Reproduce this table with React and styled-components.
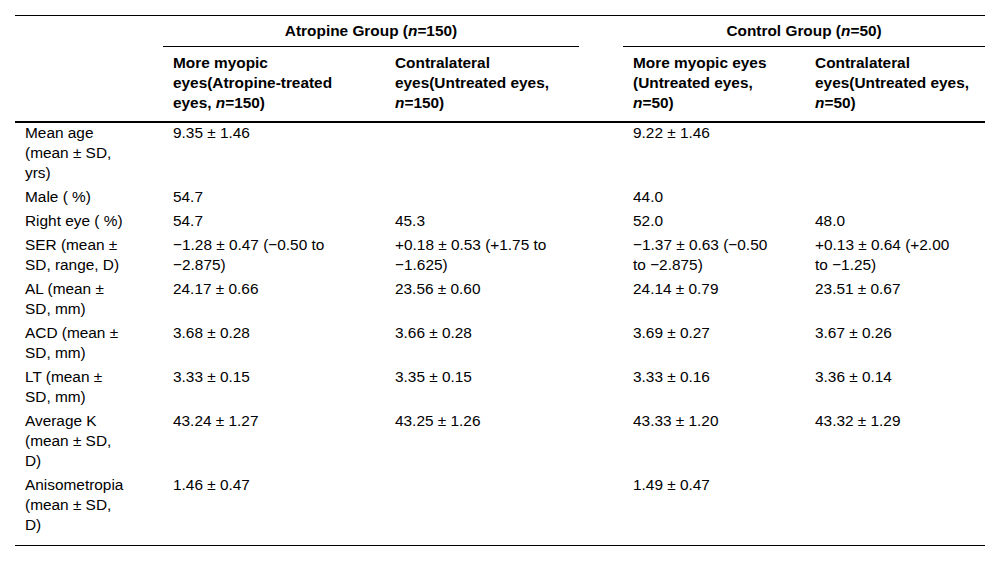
import React from "react";
import styled, { createGlobalStyle } from "styled-components";

const Global = createGlobalStyle`
  html, body { margin: 0; padding: 0; background: #ffffff; }
  body {
    font-family: "Liberation Sans", Arial, Helvetica, sans-serif;
    color: #000000;
    font-size: 15.4px;
  }
`;

const Page = styled.div`
  padding: 15px 15px 0 15px;
`;

const Table = styled.table`
  width: 970px;
  border-collapse: collapse;
  table-layout: fixed;
  border-top: 1px solid #000;
  border-bottom: 1px solid #000;
`;

const Col = styled.col`
  width: ${(p) => p.$w}px;
`;

const GroupHead = styled.th`
  font-weight: bold;
  text-align: center;
  line-height: 20px;
  padding: 5px 0 5px 0;
  white-space: nowrap;
  border-bottom: ${(p) => (p.$line ? "1px solid #000" : "none")};
`;

const SubRow = styled.tr`
  border-bottom: 2px solid #000;
`;

const SubHead = styled.th`
  font-weight: bold;
  text-align: left;
  vertical-align: top;
  line-height: 20px;
  padding: 6px 10px 8px 10px;
  white-space: nowrap;
`;

const Cell = styled.td`
  text-align: left;
  vertical-align: top;
  line-height: 20px;
  padding: 0 10px ${(p) => (p.$last ? 10 : 4)}px 10px;
  white-space: nowrap;
`;

const Line = styled.span`
  display: block;
`;

const Lines = ({ lines }) => (
  <>
    {lines.map((l, i) => (
      <Line key={i}>{l}</Line>
    ))}
  </>
);

const n = <i>n</i>;

const subHeads = [
  ["More myopic", "eyes(Atropine-treated", <>eyes, {n}=150)</>],
  ["Contralateral", "eyes(Untreated eyes,", <>{n}=150)</>],
  null,
  ["More myopic eyes", "(Untreated eyes,", <>{n}=50)</>],
  ["Contralateral", "eyes(Untreated eyes,", <>{n}=50)</>],
];

const rows = [
  [["Mean age", "(mean ± SD,", "yrs)"], ["9.35 ± 1.46"], [], ["9.22 ± 1.46"], []],
  [["Male ( %)"], ["54.7"], [], ["44.0"], []],
  [["Right eye ( %)"], ["54.7"], ["45.3"], ["52.0"], ["48.0"]],
  [
    ["SER (mean ±", "SD, range, D)"],
    ["−1.28 ± 0.47 (−0.50 to", "−2.875)"],
    ["+0.18 ± 0.53 (+1.75 to", "−1.625)"],
    ["−1.37 ± 0.63 (−0.50", "to −2.875)"],
    ["+0.13 ± 0.64 (+2.00", "to −1.25)"],
  ],
  [["AL (mean ±", "SD, mm)"], ["24.17 ± 0.66"], ["23.56 ± 0.60"], ["24.14 ± 0.79"], ["23.51 ± 0.67"]],
  [["ACD (mean ±", "SD, mm)"], ["3.68 ± 0.28"], ["3.66 ± 0.28"], ["3.69 ± 0.27"], ["3.67 ± 0.26"]],
  [["LT (mean ±", "SD, mm)"], ["3.33 ± 0.15"], ["3.35 ± 0.15"], ["3.33 ± 0.16"], ["3.36 ± 0.14"]],
  [["Average K", "(mean ± SD,", "D)"], ["43.24 ± 1.27"], ["43.25 ± 1.26"], ["43.33 ± 1.20"], ["43.32 ± 1.29"]],
  [["Anisometropia", "(mean ± SD,", "D)"], ["1.46 ± 0.47"], [], ["1.49 ± 0.47"], []],
];

export default function App() {
  return (
    <Page>
      <Global />
      <Table>
        <colgroup>
          <Col $w={148} />
          <Col $w={222} />
          <Col $w={194} />
          <Col $w={44} />
          <Col $w={182} />
          <Col $w={180} />
        </colgroup>
        <thead>
          <tr>
            <GroupHead />
            <GroupHead colSpan={2} $line>
              Atropine Group ({n}=150)
            </GroupHead>
            <GroupHead />
            <GroupHead colSpan={2} $line>
              Control Group ({n}=50)
            </GroupHead>
          </tr>
          <SubRow>
            <SubHead />
            {subHeads.map((h, i) => (
              <SubHead key={i}>{h ? <Lines lines={h} /> : null}</SubHead>
            ))}
          </SubRow>
        </thead>
        <tbody>
          {rows.map((r, ri) => {
            const last = ri === rows.length - 1;
            const [label, a1, a2, c1, c2] = r;
            return (
              <tr key={ri}>
                <Cell $last={last}>
                  <Lines lines={label} />
                </Cell>
                <Cell $last={last}>
                  <Lines lines={a1} />
                </Cell>
                <Cell $last={last}>
                  <Lines lines={a2} />
                </Cell>
                <Cell $last={last} />
                <Cell $last={last}>
                  <Lines lines={c1} />
                </Cell>
                <Cell $last={last}>
                  <Lines lines={c2} />
                </Cell>
              </tr>
            );
          })}
        </tbody>
      </Table>
    </Page>
  );
}
